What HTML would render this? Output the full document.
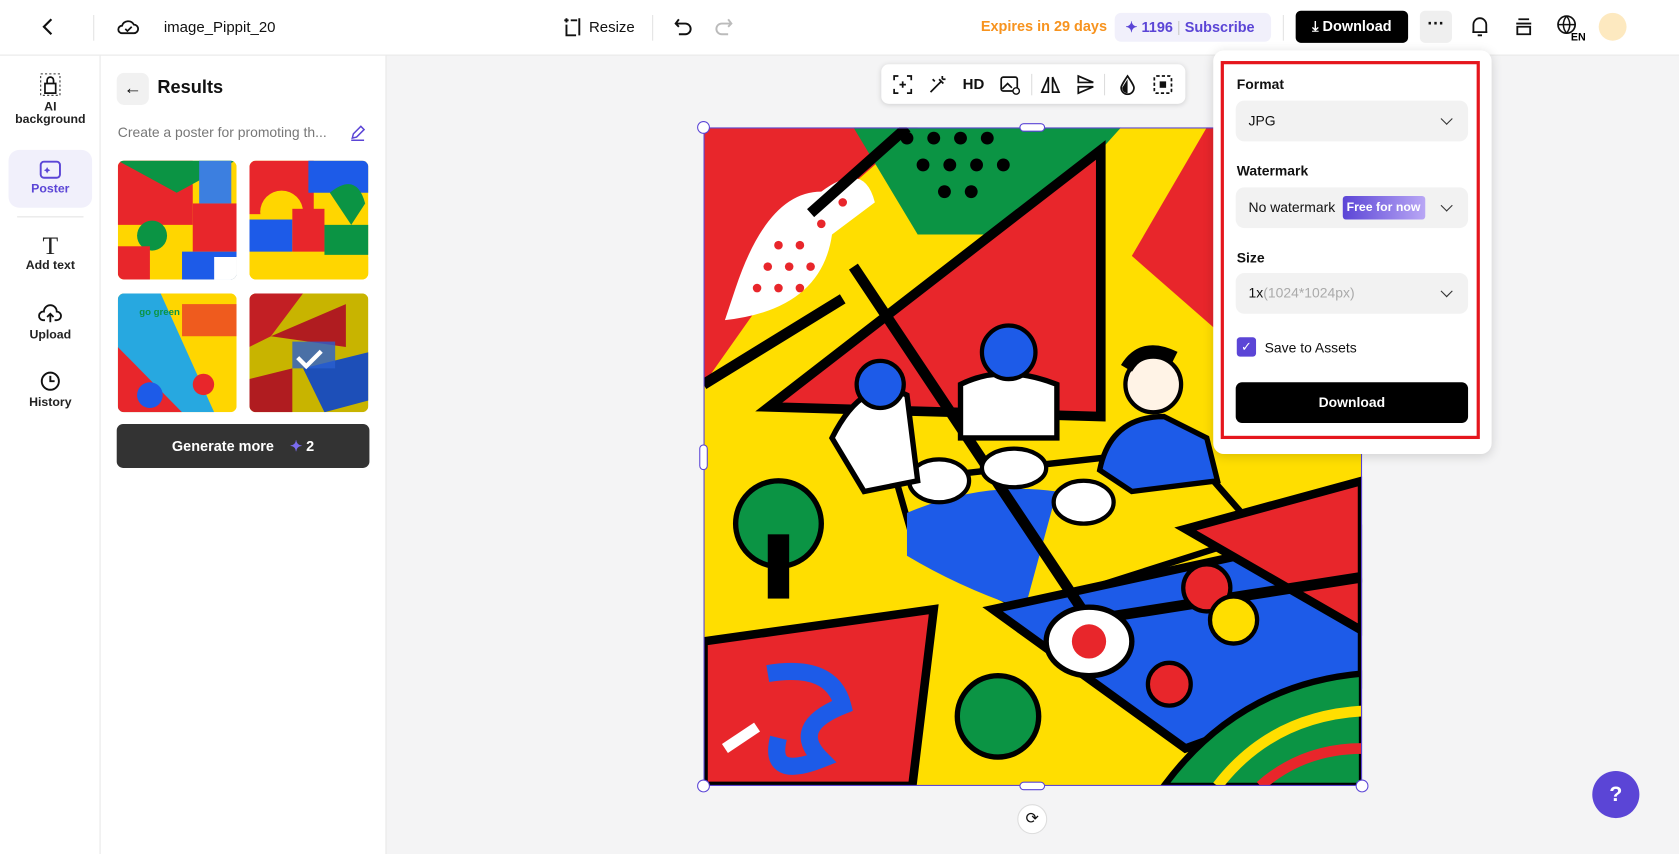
<!DOCTYPE html>
<html><head><meta charset="utf-8"><style>
*{box-sizing:border-box;margin:0;padding:0}
html,body{width:1679px;height:854px;overflow:hidden;background:#fff;font-family:"Liberation Sans",sans-serif;color:#111}
#w{width:1568px;height:798px;transform:scale(1.0708);transform-origin:0 0;position:relative}
.a{position:absolute}
.top{left:0;top:0;width:1568px;height:52px;border-bottom:1px solid #e6e6e6;background:#fff}
.side{left:0;top:52px;width:94px;height:746px;border-right:1px solid #e6e6e6;background:#fff}
.panel{left:94px;top:52px;width:267px;height:746px;border-right:1px solid #e6e6e6;background:#fff}
.canvas{left:361px;top:52px;width:1207px;height:746px;background:#f4f4f5}
.tool{width:94px;text-align:center;font-size:11.5px;font-weight:bold;color:#222}
.sel{background:#f1f0fb;color:#5b45d6;border-radius:10px;left:8px;width:78px}
.dd{background:#f2f2f2;border-radius:8px;height:38px;left:1154px;width:217px;font-size:13px;padding-left:12px;line-height:38px}
.lab{left:1155px;font-size:13px;font-weight:bold}
.chev{position:absolute;right:16px;top:13px;width:8px;height:8px;border-right:1.5px solid #333;border-bottom:1.5px solid #333;transform:rotate(45deg)}
.th{width:111px;height:111px;border-radius:6px;overflow:hidden}
.ti{position:absolute;top:9px}
</style></head><body><div id="w">
<div class="a top">
 <svg class="a" style="left:36px;top:15px" width="18" height="20"><path d="M12 3 L5 10 L12 17" fill="none" stroke="#111" stroke-width="2"/></svg>
 <div class="a" style="left:87px;top:14px;width:1px;height:24px;background:#e3e3e3"></div>
 <svg class="a" style="left:108px;top:13px" width="24" height="24"><path d="M6 18 H17 A4 4 0 0 0 17 10 A6 6 0 0 0 6 11 A3.5 3.5 0 0 0 6 18Z" fill="none" stroke="#111" stroke-width="1.7"/><path d="M9 14 l2 2 l4 -4" fill="none" stroke="#111" stroke-width="1.6"/></svg>
 <div class="a" style="left:153px;top:17px;font-size:14px">image_Pippit_20</div>
 <svg class="a" style="left:525px;top:15px" width="20" height="20"><path d="M4 2v4M2 4h4M4 8v10h9M16 2v16" fill="none" stroke="#111" stroke-width="1.8"/><path d="M8 4h6" stroke="#111" stroke-width="1.8"/></svg>
 <div class="a" style="left:550px;top:17px;font-size:14px">Resize</div>
 <div class="a" style="left:609px;top:14px;width:1px;height:24px;background:#e3e3e3"></div>
 <svg class="a" style="left:628px;top:15px" width="20" height="20"><path d="M6 3 L3 7 L6 10 M3 7 H12 A5 5 0 0 1 12 17 H6" fill="none" stroke="#111" stroke-width="1.8"/></svg>
 <svg class="a" style="left:666px;top:15px" width="20" height="20"><path d="M14 3 L17 7 L14 10 M17 7 H8 A5 5 0 0 0 8 17 H14" fill="none" stroke="#bbb" stroke-width="1.8"/></svg>
 <div class="a" style="left:916px;top:17px;font-size:13.5px;font-weight:bold;color:#f7931e">Expires in 29 days</div>
 <div class="a" style="left:1041px;top:12px;width:146px;height:27px;background:#f1f0fb;border-radius:6px;font-size:13.5px;font-weight:bold;color:#5b45d6;line-height:27px;padding-left:10px">✦ 1196 <span style="color:#ccc;font-weight:normal">|</span> Subscribe</div>
 <div class="a" style="left:1198px;top:14px;width:1px;height:24px;background:#e3e3e3"></div>
 <div class="a" style="left:1210px;top:10px;width:105px;height:30px;background:#000;border-radius:5px;color:#fff;font-size:13.5px;font-weight:bold;line-height:30px;text-align:center">⤓ Download</div>
 <div class="a" style="left:1326px;top:10px;width:30px;height:30px;background:#efefef;border-radius:5px;text-align:center;font-weight:bold;line-height:26px">···</div>
 <svg class="a" style="left:1371px;top:13px" width="22" height="24"><path d="M5 17 V10 A6 6 0 0 1 17 10 V17 H4 H18 M9 20 H13" fill="none" stroke="#111" stroke-width="1.7"/></svg>
 <svg class="a" style="left:1412px;top:13px" width="22" height="24"><path d="M6 5 H16 M4 9 H18 M5 12 H17 V19 H5 Z" fill="none" stroke="#111" stroke-width="1.7"/></svg>
 <svg class="a" style="left:1452px;top:12px" width="30" height="28"><circle cx="11" cy="11" r="8" fill="none" stroke="#111" stroke-width="1.6"/><path d="M3 11 H19 M11 3 C7 8 7 14 11 19 M11 3 C15 8 15 14 11 19" fill="none" stroke="#111" stroke-width="1.4"/><text x="15" y="26" font-size="10" font-weight="bold" font-family="Liberation Sans">EN</text></svg>
 <div class="a" style="left:1493px;top:12px;width:26px;height:26px;border-radius:50%;background:#fde9c0"></div>
</div>
<div class="a side">
 <div class="a tool" style="top:15px"><svg width="22" height="24"><rect x="2" y="2" width="18" height="20" fill="none" stroke="#333" stroke-dasharray="2 2"/><path d="M6 20 V11 H16 V20 Z M8 11 V8 A3 3 0 0 1 14 8 V11" fill="none" stroke="#111" stroke-width="1.6"/></svg><br>AI<br>background</div>
 <div class="a tool sel" style="top:88px;height:54px;padding-top:8px"><svg width="22" height="20"><rect x="2" y="3" width="18" height="15" rx="3" fill="none" stroke="#5b45d6" stroke-width="1.8"/><path d="M8 8 l1 2 l2 1 l-2 1 l-1 2 l-1 -2 l-2 -1 l2 -1Z" fill="#5b45d6"/></svg><br>Poster</div>
 <div class="a" style="left:16px;top:150px;width:62px;height:1px;background:#e3e3e3"></div>
 <div class="a tool" style="top:166px"><div style="font-size:24px;font-family:'Liberation Serif';font-weight:normal;line-height:24px">T</div>Add text</div>
 <div class="a tool" style="top:230px"><svg width="24" height="22"><path d="M7 17 H5 A4 4 0 0 1 6 9 A6 6 0 0 1 18 9 A4 4 0 0 1 18 17 H16 M12 19 V11 M9 14 L12 11 L15 14" fill="none" stroke="#111" stroke-width="1.7"/></svg><br>Upload</div>
 <div class="a tool" style="top:293px"><svg width="22" height="22"><circle cx="11" cy="11" r="8" fill="none" stroke="#111" stroke-width="1.8"/><path d="M11 6 V11 H15" fill="none" stroke="#111" stroke-width="1.8"/></svg><br>History</div>
</div>
<div class="a panel">
 <div class="a" style="left:15px;top:16px;width:30px;height:30px;background:#f1f1f1;border-radius:7px;text-align:center;line-height:30px;font-size:17px">←</div>
 <div class="a" style="left:53px;top:20px;font-size:17px;font-weight:bold">Results</div>
 <div class="a" style="left:16px;top:64px;font-size:13px;color:#777">Create a poster for promoting th...</div>
 <svg class="a" style="left:232px;top:64px" width="16" height="16"><path d="M3 13 L4 9 L11 2 L14 5 L7 12 Z M2 15 H14" fill="none" stroke="#5b45d6" stroke-width="1.4"/></svg>
 <div class="a th" style="left:16px;top:98px"><svg width="111" height="111"><rect width="111" height="111" fill="#ffd600"/><rect x="0" y="0" width="70" height="60" fill="#e8262b"/><path d="M0 0 L55 30 L110 0Z" fill="#0b9444"/><rect x="70" y="40" width="41" height="45" fill="#e8262b"/><rect x="76" y="0" width="30" height="40" fill="#3c7fe0"/><rect x="60" y="85" width="51" height="26" fill="#1d5be8"/><circle cx="32" cy="70" r="14" fill="#0b9444"/><rect x="0" y="80" width="30" height="31" fill="#e8262b"/><rect x="90" y="90" width="21" height="21" fill="#fff"/></svg></div>
 <div class="a th" style="left:139px;top:98px"><svg width="111" height="111"><rect width="111" height="111" fill="#ffd600"/><rect x="0" y="0" width="60" height="50" fill="#e8262b"/><circle cx="30" cy="48" r="20" fill="#ffd600"/><rect x="55" y="0" width="56" height="30" fill="#1d5be8"/><path d="M75 30 Q100 10 108 40 L95 60 Z" fill="#0b9444"/><rect x="0" y="55" width="40" height="30" fill="#1d5be8"/><rect x="40" y="45" width="30" height="40" fill="#e8262b"/><rect x="70" y="60" width="41" height="28" fill="#0b9444"/><rect x="0" y="90" width="111" height="21" fill="#ffd600"/></svg></div>
 <div class="a th" style="left:16px;top:222px"><svg width="111" height="111"><rect width="111" height="111" fill="#ffd600"/><path d="M0 0 H40 L90 111 H0Z" fill="#27a8e0"/><path d="M0 50 L60 111 H0Z" fill="#e8262b"/><rect x="60" y="10" width="51" height="30" fill="#e8262b" opacity=".7"/><circle cx="30" cy="95" r="12" fill="#1d5be8"/><circle cx="80" cy="85" r="10" fill="#e8262b"/><text x="20" y="20" font-size="9" font-weight="bold" fill="#0b9444">go green</text></svg></div>
 <div class="a th" style="left:139px;top:222px"><svg width="111" height="111"><rect width="111" height="111" fill="#c8b400"/><path d="M0 0 H50 L20 40 L0 50Z" fill="#c21f24"/><path d="M20 40 L90 10 L90 50Z" fill="#b01c20"/><path d="M0 80 L40 70 L40 111 H0Z" fill="#b01c20"/><path d="M50 70 L111 55 V100 L70 111Z" fill="#1d4fb8"/><rect x="40" y="45" width="40" height="25" fill="#2a5fd0" opacity=".8"/><path d="M45 60 l8 8 l14 -14" fill="none" stroke="#fff" stroke-width="4"/></svg></div>
 <div class="a" style="left:15px;top:344px;width:236px;height:41px;background:#333;border-radius:6px;color:#fff;font-size:13.5px;font-weight:bold;text-align:center;line-height:41px">Generate more &nbsp;&nbsp; <span style="color:#7b6cf0">✦</span> 2</div>
</div>
<div class="a canvas"></div>
<div class="a" style="left:823px;top:60px;width:284px;height:37px;background:#fff;border-radius:7px;box-shadow:0 1px 5px rgba(0,0,0,.15);font-size:14px;font-weight:bold">
 <svg class="ti" style="left:10px" width="20" height="20"><path d="M2 6V2H6M14 2H18V6M18 14V18H14M6 18H2V14M7 10H13M10 7V13" fill="none" stroke="#111" stroke-width="1.6"/></svg>
 <svg class="ti" style="left:43px" width="20" height="20"><path d="M3 17 L13 7 M11 5 L15 9 M14 2 V5 M17 5 H14 M5 5 L7 7" fill="none" stroke="#111" stroke-width="1.6"/></svg>
 <span class="a" style="left:76px;top:10px">HD</span>
 <svg class="ti" style="left:110px" width="20" height="20"><rect x="2" y="3" width="15" height="13" rx="2" fill="none" stroke="#111" stroke-width="1.6"/><path d="M3 14 L8 9 L12 13" fill="none" stroke="#111" stroke-width="1.5"/><circle cx="16" cy="16" r="3" fill="#fff" stroke="#111" stroke-width="1.3"/></svg>
 <div class="a" style="left:140px;top:9px;width:1px;height:20px;background:#ddd"></div>
 <svg class="ti" style="left:148px" width="20" height="20"><path d="M8 3 L2 17 H8Z M12 3 L18 17 H12Z" fill="none" stroke="#111" stroke-width="1.6"/></svg>
 <svg class="ti" style="left:181px" width="20" height="20"><path d="M3 2 L17 8 H3Z M3 12 H17 L3 18Z" fill="none" stroke="#111" stroke-width="1.6"/></svg>
 <div class="a" style="left:208px;top:9px;width:1px;height:20px;background:#ddd"></div>
 <svg class="ti" style="left:220px" width="20" height="20"><path d="M10 2 C6 8 4 11 4 13 A6 6 0 0 0 16 13 C16 11 14 8 10 2Z" fill="none" stroke="#111" stroke-width="1.6"/><path d="M10 5 V18 A5 5 0 0 1 5 13Z" fill="#111"/></svg>
 <svg class="ti" style="left:253px" width="20" height="20"><rect x="2" y="2" width="16" height="16" rx="2" fill="none" stroke="#111" stroke-width="1.6" stroke-dasharray="3 2"/><rect x="7" y="7" width="6" height="6" fill="#111"/></svg>
</div>
<svg class="a" style="left:657px;top:119px" width="615" height="615" viewBox="0 0 615 615">
 <rect width="615" height="615" fill="#ffde00"/>
 <path d="M0 0 H200 L120 70 L0 240Z" fill="#e8262b"/>
 <path d="M30 150 Q60 60 110 60 Q150 30 160 70 L120 100 Q110 170 20 180Z" fill="#fff"/>
 <g fill="#e8262b"><circle cx="50" cy="150" r="4"/><circle cx="70" cy="150" r="4"/><circle cx="90" cy="150" r="4"/><circle cx="60" cy="130" r="4"/><circle cx="80" cy="130" r="4"/><circle cx="100" cy="130" r="4"/><circle cx="70" cy="110" r="4"/><circle cx="90" cy="110" r="4"/><circle cx="110" cy="90" r="4"/><circle cx="130" cy="70" r="4"/></g>
 <path d="M140 0 H390 L300 100 L200 100Z" fill="#0b9444"/>
 <g fill="#000"><circle cx="190" cy="10" r="6"/><circle cx="215" cy="10" r="6"/><circle cx="240" cy="10" r="6"/><circle cx="265" cy="10" r="6"/><circle cx="205" cy="35" r="6"/><circle cx="230" cy="35" r="6"/><circle cx="255" cy="35" r="6"/><circle cx="280" cy="35" r="6"/><circle cx="225" cy="60" r="6"/><circle cx="250" cy="60" r="6"/></g>
 <path d="M61 261 L371 21 L371 270Z" fill="#e8262b" stroke="#000" stroke-width="9"/>
 <path d="M400 120 L470 0 H615 V300 L480 190Z" fill="#e8262b"/>
 <path d="M180 330 L450 300 L520 380 L300 450 L200 400Z" fill="#ffde00" stroke="#000" stroke-width="6"/>
 <path d="M190 360 Q260 330 330 340 L300 450 Q240 430 190 400Z" fill="#1d5be8"/>
 <path d="M270 450 L615 375 V520 L450 580Z" fill="#1d5be8" stroke="#000" stroke-width="8"/>
 <path d="M450 375 L615 330 V470Z" fill="#e8262b" stroke="#000" stroke-width="8"/>
 <path d="M0 480 L215 450 L195 615 H0Z" fill="#e8262b" stroke="#000" stroke-width="8"/>
 <path d="M60 510 Q120 500 130 540 Q80 560 110 590 Q60 610 70 570" fill="none" stroke="#1d5be8" stroke-width="16"/>
 <path d="M430 615 Q500 520 615 510 V615Z" fill="#0b9444" stroke="#000" stroke-width="6"/>
 <path d="M480 615 Q530 550 615 545" fill="none" stroke="#ffde00" stroke-width="10"/>
 <path d="M520 615 Q560 580 615 580" fill="none" stroke="#e8262b" stroke-width="10"/>
 <path d="M140 130 L360 460 M0 240 L130 160 M360 460 L615 420 M190 0 L100 80" stroke="#000" stroke-width="10" fill="none"/>
 <circle cx="70" cy="370" r="40" fill="#0b9444" stroke="#000" stroke-width="5"/>
 <rect x="60" y="380" width="20" height="60" fill="#000"/>
 <circle cx="275" cy="550" r="38" fill="#0b9444" stroke="#000" stroke-width="5"/>
 <ellipse cx="220" cy="330" rx="28" ry="20" fill="#fff" stroke="#000" stroke-width="4"/>
 <ellipse cx="290" cy="318" rx="30" ry="18" fill="#fff" stroke="#000" stroke-width="4"/>
 <ellipse cx="355" cy="350" rx="28" ry="20" fill="#fff" stroke="#000" stroke-width="4"/>
 <ellipse cx="360" cy="480" rx="40" ry="32" fill="#fff" stroke="#000" stroke-width="5"/>
 <circle cx="360" cy="480" r="16" fill="#e8262b"/>
 <circle cx="470" cy="430" r="22" fill="#e8262b" stroke="#000" stroke-width="4"/>
 <circle cx="495" cy="460" r="22" fill="#ffde00" stroke="#000" stroke-width="4"/>
 <circle cx="435" cy="520" r="20" fill="#e8262b" stroke="#000" stroke-width="4"/>
 <path d="M120 290 Q150 230 190 250 L200 330 L150 340Z" fill="#fff" stroke="#000" stroke-width="5"/>
 <circle cx="165" cy="240" r="22" fill="#1d5be8" stroke="#000" stroke-width="4"/>
 <path d="M240 240 Q280 220 330 240 L330 290 L240 290Z" fill="#fff" stroke="#000" stroke-width="5"/>
 <circle cx="285" cy="210" r="25" fill="#1d5be8" stroke="#000" stroke-width="4"/>
 <path d="M370 320 Q380 270 430 270 L470 290 L480 330 L400 340Z" fill="#1d5be8" stroke="#000" stroke-width="5"/>
 <circle cx="420" cy="240" r="26" fill="#fff3e6" stroke="#000" stroke-width="4"/>
 <path d="M395 225 Q410 200 440 215" stroke="#000" stroke-width="12" fill="none"/>
 <path d="M20 580 L50 560" stroke="#fff" stroke-width="10"/>
</svg>
<div class="a" style="left:657px;top:119px;width:615px;height:615px;border:1px solid #5b45d6"></div>
<div class="a" style="left:651px;top:113px;width:12px;height:12px;border-radius:50%;background:#fff;border:1px solid #5b45d6"></div>
<div class="a" style="left:651px;top:728px;width:12px;height:12px;border-radius:50%;background:#fff;border:1px solid #5b45d6"></div>
<div class="a" style="left:1266px;top:728px;width:12px;height:12px;border-radius:50%;background:#fff;border:1px solid #5b45d6"></div>
<div class="a" style="left:952px;top:115px;width:24px;height:8px;border-radius:4px;background:#fff;border:1px solid #5b45d6"></div>
<div class="a" style="left:952px;top:730px;width:24px;height:8px;border-radius:4px;background:#fff;border:1px solid #5b45d6"></div>
<div class="a" style="left:653px;top:415px;width:8px;height:24px;border-radius:4px;background:#fff;border:1px solid #5b45d6"></div>
<div class="a" style="left:950px;top:751px;width:28px;height:28px;border-radius:50%;background:#fff;border:1px solid #ddd;text-align:center;line-height:26px;font-size:15px">⟳</div>
<div class="a" style="left:1487px;top:720px;width:44px;height:44px;border-radius:50%;background:#5b45d6;color:#fff;text-align:center;line-height:44px;font-size:20px;font-weight:bold">?</div>
<div class="a" style="left:1133px;top:47px;width:260px;height:377px;background:#fff;border-radius:10px;box-shadow:0 2px 10px rgba(0,0,0,.15)"></div>
<div class="a" style="left:1140px;top:57px;width:242px;height:353px;border:3px solid #e5161d"></div>
<div class="a lab" style="top:71px">Format</div>
<div class="a dd" style="top:94px">JPG<span class="chev"></span></div>
<div class="a lab" style="top:152px">Watermark</div>
<div class="a dd" style="top:175px">No watermark <span style="display:inline-block;background:linear-gradient(90deg,#5b45d6,#b9a7f5);color:#fff;font-size:11.5px;font-weight:bold;line-height:22px;padding:0 4px;border-radius:3px;vertical-align:1px;margin-left:3px">Free for now</span><span class="chev"></span></div>
<div class="a lab" style="top:233px">Size</div>
<div class="a dd" style="top:255px">1x<span style="color:#aaa">(1024*1024px)</span><span class="chev"></span></div>
<div class="a" style="left:1155px;top:315px;width:18px;height:18px;background:#5b45d6;border-radius:3px;color:#fff;font-size:12px;text-align:center;line-height:18px">✓</div>
<div class="a" style="left:1181px;top:317px;font-size:13px">Save to Assets</div>
<div class="a" style="left:1154px;top:357px;width:217px;height:38px;background:#000;border-radius:6px;color:#fff;font-size:13px;font-weight:bold;text-align:center;line-height:38px">Download</div>
</div></body></html>
